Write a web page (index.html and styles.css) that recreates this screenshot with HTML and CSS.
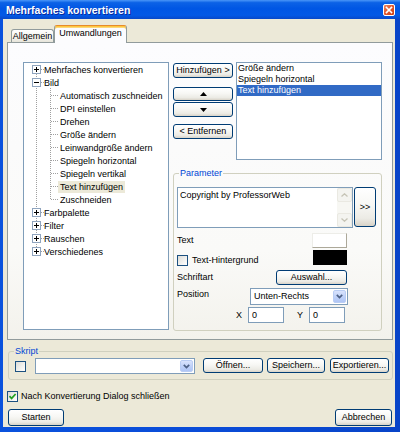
FILE: index.html
```html
<!DOCTYPE html>
<html lang="de">
<head>
<meta charset="utf-8">
<title>Mehrfaches konvertieren</title>
<link rel="stylesheet" href="styles.css">
</head>
<body>
<div class="window">
  <div class="titlebar">
    <span class="title">Mehrfaches konvertieren</span>
    <span class="close"><svg width="10" height="10" viewBox="0 0 10 10"><path d="M2.5 2.5 L7.5 7.5 M7.5 2.5 L2.5 7.5" stroke="#fff" stroke-width="1.6" stroke-linecap="square"/></svg></span>
  </div>
  <div class="client">
    <div class="tabs">
      <div class="tab tab-a">Allgemein</div>
      <div class="tab active">Umwandlungen</div>
    </div>
    <div class="panel">
      <div class="tree">
        <svg class="tree-lines" width="144" height="266" viewBox="0 0 144 266">
          <g stroke="#A0A0A0" stroke-width="1" stroke-dasharray="1 1" fill="none">
            <path d="M12.5 7 V189"/>
            <path d="M17 6.5 H20 M17 19.5 H20 M17 149.5 H20 M17 162.5 H20 M17 175.5 H20 M17 188.5 H20"/>
            <path d="M26.5 25 V137"/>
            <path d="M27 32.5 H34 M27 45.5 H34 M27 58.5 H34 M27 71.5 H34 M27 84.5 H34 M27 97.5 H34 M27 110.5 H34 M27 123.5 H34 M27 136.5 H34"/>
          </g>
        </svg>
        <div class="node root"><svg class="exp" width="9" height="9" viewBox="0 0 9 9"><rect x="0.5" y="0.5" width="8" height="8" fill="#fff" stroke="#8FA4BE"/><path d="M2 4.5 H7 M4.5 2 V7" stroke="#000"/></svg><span class="lbl">Mehrfaches konvertieren</span></div>
        <div class="node root"><svg class="exp" width="9" height="9" viewBox="0 0 9 9"><rect x="0.5" y="0.5" width="8" height="8" fill="#fff" stroke="#8FA4BE"/><path d="M2 4.5 H7" stroke="#000"/></svg><span class="lbl">Bild</span></div>
        <div class="node child"><span class="lbl">Automatisch zuschneiden</span></div>
        <div class="node child"><span class="lbl">DPI einstellen</span></div>
        <div class="node child"><span class="lbl">Drehen</span></div>
        <div class="node child"><span class="lbl">Größe ändern</span></div>
        <div class="node child"><span class="lbl">Leinwandgröße ändern</span></div>
        <div class="node child"><span class="lbl">Spiegeln horizontal</span></div>
        <div class="node child"><span class="lbl">Spiegeln vertikal</span></div>
        <div class="node child"><span class="lbl sel">Text hinzufügen</span></div>
        <div class="node child"><span class="lbl">Zuschneiden</span></div>
        <div class="node root"><svg class="exp" width="9" height="9" viewBox="0 0 9 9"><rect x="0.5" y="0.5" width="8" height="8" fill="#fff" stroke="#8FA4BE"/><path d="M2 4.5 H7 M4.5 2 V7" stroke="#000"/></svg><span class="lbl">Farbpalette</span></div>
        <div class="node root"><svg class="exp" width="9" height="9" viewBox="0 0 9 9"><rect x="0.5" y="0.5" width="8" height="8" fill="#fff" stroke="#8FA4BE"/><path d="M2 4.5 H7 M4.5 2 V7" stroke="#000"/></svg><span class="lbl">Filter</span></div>
        <div class="node root"><svg class="exp" width="9" height="9" viewBox="0 0 9 9"><rect x="0.5" y="0.5" width="8" height="8" fill="#fff" stroke="#8FA4BE"/><path d="M2 4.5 H7 M4.5 2 V7" stroke="#000"/></svg><span class="lbl">Rauschen</span></div>
        <div class="node root"><svg class="exp" width="9" height="9" viewBox="0 0 9 9"><rect x="0.5" y="0.5" width="8" height="8" fill="#fff" stroke="#8FA4BE"/><path d="M2 4.5 H7 M4.5 2 V7" stroke="#000"/></svg><span class="lbl">Verschiedenes</span></div>
      </div>
      <div class="side">
        <div class="side-top">
          <div class="btncol">
            <div class="btn b-add">Hinzufügen &gt;</div>
            <div class="btn b-up"><svg width="7" height="4" viewBox="0 0 7 4"><polygon points="0,4 7,4 3.5,0" fill="#000"/></svg></div>
            <div class="btn b-down"><svg width="7" height="4" viewBox="0 0 7 4"><polygon points="0,0 7,0 3.5,4" fill="#000"/></svg></div>
            <div class="btn b-rem">&lt; Entfernen</div>
          </div>
          <div class="listbox">
            <div class="li">Größe ändern</div>
            <div class="li">Spiegeln horizontal</div>
            <div class="li sel">Text hinzufügen</div>
          </div>
        </div>
        <fieldset class="group param">
          <legend>Parameter</legend>
          <div class="memo-row">
            <div class="memo">
              <div class="memo-text">Copyright by ProfessorWeb</div>
              <div class="vscroll">
                <div class="sbtn"><svg width="7" height="4" viewBox="0 0 7 4"><path d="M0.5 3.5 L3.5 0.8 L6.5 3.5" stroke="#C6C4B6" stroke-width="1.3" fill="none"/></svg></div>
                <div class="strack"></div>
                <div class="sbtn"><svg width="7" height="4" viewBox="0 0 7 4"><path d="M0.5 0.5 L3.5 3.2 L6.5 0.5" stroke="#C6C4B6" stroke-width="1.3" fill="none"/></svg></div>
              </div>
            </div>
            <div class="btn b-more">&gt;&gt;</div>
          </div>
          <div class="prow r-text">
            <span>Text</span>
            <span class="swatch white"></span>
          </div>
          <div class="prow r-check">
            <span class="chklbl"><span class="cb"></span><span class="cbtext">Text-Hintergrund</span></span>
            <span class="swatch black"></span>
          </div>
          <div class="prow r-font">
            <span>Schriftart</span>
            <div class="btn b-sel">Auswahl...</div>
          </div>
          <div class="prow r-pos">
            <span class="poslbl">Position</span>
            <div class="combo c-pos"><span class="combo-text">Unten-Rechts</span><span class="dd"><svg width="7" height="5" viewBox="0 0 7 5"><path d="M0.8 0.8 L3.5 3.6 L6.2 0.8" stroke="#4D6185" stroke-width="1.7" fill="none"/></svg></span></div>
          </div>
          <div class="prow r-xy">
            <span class="xl">X</span>
            <div class="edit">0</div>
            <span class="yl">Y</span>
            <div class="edit">0</div>
          </div>
        </fieldset>
      </div>
    </div>
    <fieldset class="group skript">
      <legend>Skript</legend>
      <div class="skrow">
        <span class="cb sk-cb"></span>
        <div class="combo c-sk"><span class="combo-text"></span><span class="dd"><svg width="7" height="5" viewBox="0 0 7 5"><path d="M0.8 0.8 L3.5 3.6 L6.2 0.8" stroke="#4D6185" stroke-width="1.7" fill="none"/></svg></span></div>
        <div class="btn b-open">Öffnen...</div>
        <div class="btn b-save">Speichern...</div>
        <div class="btn b-exp">Exportieren...</div>
      </div>
    </fieldset>
    <div class="chkrow">
      <span class="cb checked"><svg width="9" height="9" viewBox="0 0 9 9"><path d="M1.5 4.2 L3.6 6.4 L7.6 2" stroke="#21A121" stroke-width="1.7" fill="none"/></svg></span>
      <span class="chktext">Nach Konvertierung Dialog schließen</span>
    </div>
    <div class="footer">
      <div class="btn b-start">Starten</div>
      <div class="btn b-cancel">Abbrechen</div>
    </div>
  </div>
</div>
</body>
</html>
```

FILE: styles.css
```css
* { box-sizing: border-box; }
html, body { margin: 0; padding: 0; }
body {
  width: 400px;
  height: 432px;
  overflow: hidden;
  font-family: "Liberation Sans", Arial, sans-serif;
  font-size: 9px;
  color: #000;
  background: #fff;
}
.window {
  width: 400px;
  height: 432px;
  display: flex;
  flex-direction: column;
  background: linear-gradient(to right, #0A52DD 0%, #0A4CD8 50%, #0844C8 100%);
}
.titlebar {
  height: 19px;
  flex: none;
  display: flex;
  align-items: center;
  justify-content: space-between;
  padding: 0 5px 0 6px;
  background: linear-gradient(to bottom, #4A96F8 0%, #0C62E6 14%, #0056E4 45%, #0359E6 80%, #0848C9 100%);
}
.title {
  color: #fff;
  font-weight: bold;
  font-size: 10.5px;
  line-height: 12px;
  text-shadow: 1px 1px 0 #0B2A9C;
  white-space: nowrap;
}
.close {
  width: 12px;
  height: 12px;
  border: 1px solid #fff;
  border-radius: 2px;
  background: linear-gradient(135deg, #EE8866 0%, #E25A30 45%, #CC3C12 100%);
  display: flex;
  align-items: center;
  justify-content: center;
}
.client {
  flex: 1;
  margin: 0 5px 5px 3px;
  background: #ECE9D8;
  display: flex;
  flex-direction: column;
}
/* tabs */
.tabs {
  display: flex;
  align-items: flex-end;
  height: 18px;
  margin-top: 6px;
  padding-left: 8px;
  position: relative;
  z-index: 1;
  flex: none;
}
.tab {
  height: 13px;
  margin-bottom: 1px;
  border: 1px solid #919B9C;
  border-bottom: none;
  border-radius: 3px 3px 0 0;
  background: linear-gradient(#FFFFFF, #F1F0EA 70%, #E6E4DA);
  display: flex;
  align-items: center;
  justify-content: center;
  line-height: 11px;
  white-space: nowrap;
}
.tab-a { width: 43px; }
.tab.active {
  width: 73px;
  height: 18px;
  margin-bottom: 0;
  background: #FCFCFE;
  border-top: 1px solid #E68B2C;
  box-shadow: inset 0 1px 0 #FFC83C, inset 0 2px 0 #FBD77E;
  padding-bottom: 3px;
}
.panel {
  flex: none;
  margin: -1px 2px 0 4px;
  height: 298px;
  border: 1px solid #919B9C;
  background: linear-gradient(#FCFCFE 0%, #FAFAF8 70%, #F3F2EC 100%);
  display: flex;
  align-items: flex-start;
  padding: 19px 0 0 15px;
}
/* tree */
.tree {
  flex: none;
  width: 146px;
  height: 268px;
  border: 1px solid #7F9DB9;
  background: #fff;
  position: relative;
}
.tree-lines { position: absolute; left: 0; top: 0; }
.node {
  position: relative;
  height: 13px;
  display: flex;
  align-items: center;
}
.node.root { padding-left: 8px; }
.node.child { padding-left: 34px; }
.exp { flex: none; margin-right: 1px; display: block; }
.lbl {
  padding: 0 2px;
  line-height: 12px;
  height: 12px;
  white-space: nowrap;
}
.lbl.sel { background: #ECE9D8; }
/* side */
.side {
  flex: none;
  margin-left: 4px;
  width: 209px;
  display: flex;
  flex-direction: column;
}
.side-top { display: flex; align-items: flex-start; }
.btncol { width: 60px; display: flex; flex-direction: column; flex: none; }
.btn {
  border: 1px solid #003C74;
  border-radius: 3px;
  background: linear-gradient(#FFFFFF 0%, #F7F7F4 45%, #ECEBE5 80%, #D8D3C8 100%);
  display: flex;
  align-items: center;
  justify-content: center;
  line-height: 11px;
  white-space: nowrap;
  flex: none;
}
.b-add { margin-top: 1px; height: 15px; }
.b-up { margin-top: 9px; height: 14px; }
.b-down { margin-top: 1px; height: 15px; }
.b-rem { margin-top: 7px; height: 15px; }
.listbox {
  flex: none;
  margin-left: 3px;
  width: 146px;
  height: 98px;
  border: 1px solid #7F9DB9;
  background: #fff;
}
.li { height: 11px; line-height: 11px; padding-left: 1px; white-space: nowrap; }
.li.sel { background: #316AC5; color: #fff; }
/* group boxes */
.group {
  border: 1px solid #D0D0BF;
  border-radius: 3px;
  min-width: 0;
}
.group legend {
  color: #0046D5;
  padding: 0 1px;
  line-height: 12px;
  font-size: 9px;
}
.group.param {
  margin: 7px 0 0 0;
  height: 164px;
  padding: 8px 5px 0 3px;
}
.param legend { margin-left: 2px; }
.memo-row { display: flex; align-items: flex-start; }
.memo {
  width: 176px;
  height: 41px;
  border: 1px solid #7F9DB9;
  background: #fff;
  display: flex;
}
.memo-text { flex: 1; padding: 2px 2px 0 2px; line-height: 11px; white-space: nowrap; }
.vscroll {
  width: 15px;
  display: flex;
  flex-direction: column;
  background: #F7F7F3;
}
.sbtn {
  height: 14px;
  border: 1px solid #EAE9E2;
  border-radius: 2px;
  background: #F4F4F0;
  display: flex;
  align-items: center;
  justify-content: center;
}
.strack { flex: 1; }
.b-more { margin-left: 1px; width: 22px; height: 40px; }
.prow {
  display: flex;
  justify-content: space-between;
  align-items: center;
  padding-right: 29px;
  line-height: 11px;
  white-space: nowrap;
}
.r-text { margin-top: 5px; height: 15px; }
.swatch { width: 35px; height: 15px; }
.swatch.white {
  background: #fff;
  border: 1px solid;
  border-color: #EDEDE8 #ACA899 #ACA899 #EDEDE8;
}
.swatch.black { background: #000; width: 34px; }
.r-check { margin-top: 2px; height: 16px; align-items: flex-start; }
.chklbl { display: flex; align-items: center; margin-top: 5px; }
.cb {
  width: 11px;
  height: 11px;
  border: 1px solid #1C5180;
  background: linear-gradient(135deg, #DCDCD7 0%, #F2F2EF 60%, #FFFFFF 100%);
  flex: none;
  display: flex;
  align-items: center;
  justify-content: center;
}
.cbtext { margin-left: 4px; }
.r-font { margin-top: 4px; height: 15px; }
.b-sel { width: 71px; height: 15px; }
.r-pos { margin-top: 3px; height: 17px; align-items: flex-start; }
.poslbl { padding-top: 1px; }
.combo {
  display: flex;
  align-items: stretch;
  border: 1px solid #7F9DB9;
  background: #fff;
  padding: 1px;
  flex: none;
}
.combo-text { flex: 1; padding-left: 2px; line-height: 13px; white-space: nowrap; }
.dd {
  width: 13px;
  border: 1px solid #B9CDF4;
  border-radius: 2px;
  background: linear-gradient(#D9E3FC, #BCCFF8 60%, #AFC5F5);
  display: flex;
  align-items: center;
  justify-content: center;
}
.c-pos { width: 98px; height: 17px; margin-right: -1px; }
.r-xy { margin-top: 2px; height: 16px; justify-content: flex-end; padding-right: 31px; }
.edit {
  width: 36px;
  height: 16px;
  border: 1px solid #7F9DB9;
  background: #fff;
  padding-left: 3px;
  line-height: 14px;
}
.xl { margin-right: 6px; }
.yl { margin-left: 13px; margin-right: 6px; }
/* skript */
.group.skript {
  flex: none;
  margin: 5px 2px 0 5px;
  height: 35px;
  padding: 1px 3px 0 6px;
}
.skript legend { margin-left: -1px; }
.skrow { display: flex; align-items: flex-start; }
.sk-cb { margin-top: 3px; }
.c-sk { margin-left: 9px; width: 160px; height: 16px; }
.b-open { margin-left: 8px; width: 60px; height: 15px; }
.b-save { margin-left: 4px; width: 58px; height: 15px; }
.b-exp { margin-left: 5px; width: 59px; height: 15px; }
.chkrow {
  flex: none;
  margin-top: 10px;
  height: 12px;
  padding-left: 4px;
  display: flex;
  align-items: center;
}
.chktext { margin-left: 3px; line-height: 11px; white-space: nowrap; }
.footer {
  flex: none;
  margin-top: 7px;
  display: flex;
  justify-content: space-between;
  padding: 0 3px 0 5px;
}
.b-start { width: 56px; height: 17px; }
.b-cancel { width: 57px; height: 17px; }
```
